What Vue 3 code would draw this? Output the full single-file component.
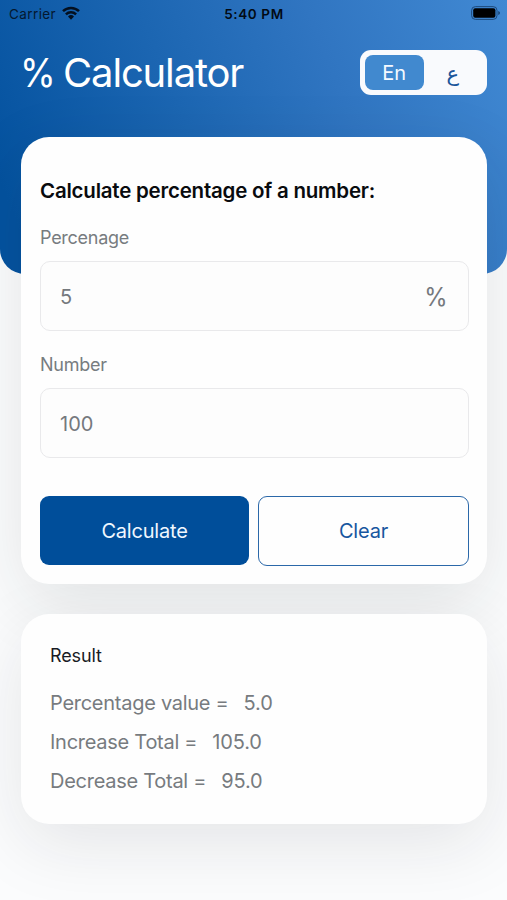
<script setup>
import { ref, computed } from 'vue'

const languages = [
  { id: 'en', label: 'En' },
  { id: 'ar', label: 'ع' },
]
const language = ref('en')
const percentage = ref('5')
const amount = ref('100')
const solved = ref({ p: 5, n: 100 })

const results = computed(() => {
  if (!solved.value) return []
  const { p, n } = solved.value
  const value = (n * p) / 100
  return [
    { id: 'value', label: 'Percentage value =', total: value.toFixed(1) },
    { id: 'increase', label: 'Increase Total =', total: (n + value).toFixed(1) },
    { id: 'decrease', label: 'Decrease Total =', total: (n - value).toFixed(1) },
  ]
})

function calculate() {
  solved.value = { p: Number(percentage.value), n: Number(amount.value) }
}

function clear() {
  percentage.value = ''
  amount.value = ''
  solved.value = null
}
</script>

<template>
  <div class="screen">
    <header class="hero">
      <div class="status">
        <div class="carrier">
          <span>Carrier</span>
          <svg class="wifi" viewBox="0 0 18 14" width="18" height="14">
            <g fill="none" stroke="#04101f" stroke-width="2.5">
              <path d="M1 5.1a11.6 11.6 0 0 1 16 0" />
              <path d="M3.9 8.4a7.4 7.4 0 0 1 10.2 0" />
            </g>
            <path d="M9 13.7 6 10.5a4.3 4.3 0 0 1 6 0z" fill="#04101f" />
          </svg>
        </div>
        <span class="time">5:40 PM</span>
        <svg class="battery" viewBox="0 0 30 14" width="30" height="14">
          <rect x=".6" y=".6" width="25.4" height="12.8" rx="3.8" fill="none" stroke="#1d4a7c" stroke-width="1" />
          <rect x="2.200" y="2.200" width="22.2" height="9.6" rx="2" fill="#000" />
          <path d="M27.200 5c1.500.5 1.800 1.200 1.800 2s-.3 1.500-1.800 2z" fill="#1d4a7c" />
        </svg>
      </div>
      <div class="titlebar">
        <h1><span class="sign">%</span><span>Calculator</span></h1>
        <div class="switch">
          <button
            v-for="item in languages"
            :key="item.id"
            :class="['lang', item.id, { active: language === item.id }]"
            @click="language = item.id"
          >{{ item.label }}</button>
        </div>
      </div>
    </header>

    <main>
      <section class="card form">
        <h2>Calculate percentage of a number:</h2>
        <label for="percentage" class="l1">Percenage</label>
        <div class="field">
          <input id="percentage" v-model="percentage" inputmode="decimal" />
          <span class="unit">%</span>
        </div>
        <label for="amount" class="l2">Number</label>
        <div class="field">
          <input id="amount" v-model="amount" inputmode="decimal" />
        </div>
        <div class="actions">
          <button class="primary" @click="calculate">Calculate</button>
          <button class="outline" @click="clear">Clear</button>
        </div>
      </section>

      <section class="card result">
        <h3>Result</h3>
        <p v-for="row in results" :key="row.id" :class="row.id">
          <span>{{ row.label }}</span><span class="total">{{ row.total }}</span>
        </p>
      </section>
    </main>
  </div>
</template>

<style>
body {
  margin: 0;
  background: #fbfcfd;
}
</style>

<style scoped>
* {
  box-sizing: border-box;
}
.screen {
  width: 507px;
  height: 900px;
  overflow: hidden;
  background: #fbfcfd;
  font-family: Inter, "Liberation Sans", sans-serif;
}
button,
input {
  font-family: inherit;
  margin: 0;
  padding: 0;
  border: 0;
}
h1,
h2,
h3,
p {
  margin: 0;
  white-space: nowrap;
}
.hero {
  height: 274px;
  border-radius: 0 0 25px 25px;
  background: linear-gradient(68deg, #04529f 6%, #1c66b2 40%, #3075c1 67%, #4189d3 100%);
}
.status {
  display: grid;
  grid-template-columns: 1fr auto 1fr;
  align-items: center;
  height: 28px;
  padding: 0 6px 0 9px;
  color: #04182f;
  font-size: 13.5px;
}
.carrier {
  display: flex;
  align-items: center;
  gap: 5.5px;
  letter-spacing: 0.4px;
}
.wifi {
  margin-top: -3px;
}
.time {
  margin-left: -2px;
  color: #020a14;
  font-weight: 600;
  letter-spacing: 0.6px;
}
.battery {
  justify-self: end;
  margin-top: -2px;
}
.titlebar {
  display: flex;
  justify-content: space-between;
  align-items: center;
  height: 45px;
  margin-top: 22px;
  padding: 0 20px 0 20px;
}
h1 {
  display: flex;
  color: #fff;
  font-size: 40px;
  font-weight: 400;
  line-height: 45px;
  letter-spacing: -1.150px;
}
.sign {
  width: 43px;
  transform: scaleX(0.91);
  transform-origin: left;
}
.switch {
  display: flex;
  width: 127px;
  height: 45px;
  padding: 5px;
  border-radius: 11px;
  background: #f9fafd;
}
.lang {
  flex: 1;
  border-radius: 8px;
  background: transparent;
  color: #1b559a;
  font-size: 20px;
}
.lang.ar {
  padding-top: 2px;
  font-family: "DejaVu Sans", sans-serif;
  font-size: 21px;
}
.lang.active {
  background: #4189cf;
  color: #f4f9ff;
}
main {
  display: flex;
  flex-direction: column;
  gap: 30px;
  margin-top: -137px;
  padding: 0 20px 0 21px;
}
.card {
  border-radius: 28px;
  background: #fefefe;
}
.form {
  height: 447px;
  padding: 41px 19px 0;
  box-shadow: 0 20px 70px rgba(30, 34, 38, 0.11);
}
h2 {
  color: #090b0e;
  font-size: 20.5px;
  font-weight: 600;
  line-height: 26px;
  letter-spacing: -0.22px;
}
label {
  display: block;
  color: #777c80;
  font-size: 18px;
  line-height: 24px;
  letter-spacing: -0.27px;
}
.l1 {
  margin-top: 22px;
}
.l2 {
  margin-top: 22px;
}
.field {
  display: flex;
  align-items: center;
  width: 429px;
  height: 70px;
  margin-top: 11px;
  padding: 1px 20px 0 19px;
  border: 1px solid #e9e9eb;
  border-radius: 10px;
  background: #fdfdfd;
  color: #75797d;
}
.field input {
  flex: 1;
  min-width: 0;
  height: 40px;
  outline: 0;
  background: transparent;
  color: inherit;
  font-size: 20px;
}
.unit {
  font-size: 25px;
  transform: scaleX(0.95);
  transform-origin: right;
}
.actions {
  display: grid;
  grid-template-columns: 209px 211px;
  gap: 9px;
  height: 70px;
  margin-top: 38px;
}
.actions button {
  border-radius: 9px;
  font-size: 20px;
  letter-spacing: -0.2px;
}
.primary {
  height: 69px;
  background: #004e9a;
  color: #f0f7ff;
}
.actions .outline {
  height: 70px;
  border: 1px solid #2b68a9;
  background: #fefefe;
  color: #17569f;
}
.result {
  height: 210px;
  padding: 30px 29px;
  box-shadow: 0 20px 70px rgba(30, 34, 38, 0.1);
}
.form {
  position: relative;
  z-index: 1;
}
.result {
  position: relative;
  z-index: 2;
  clip-path: inset(-30px -60px -100px -60px);
}
h3 {
  margin-bottom: 15px;
  color: #181b24;
  font-size: 18px;
  font-weight: 400;
  line-height: 24px;
  letter-spacing: -0.1px;
}
p {
  display: flex;
  gap: 15px;
  height: 39px;
  color: #777b7f;
  font-size: 20px;
  line-height: 40px;
  letter-spacing: -0.27px;
}
.total {
  letter-spacing: -0.15px;
}
</style>
